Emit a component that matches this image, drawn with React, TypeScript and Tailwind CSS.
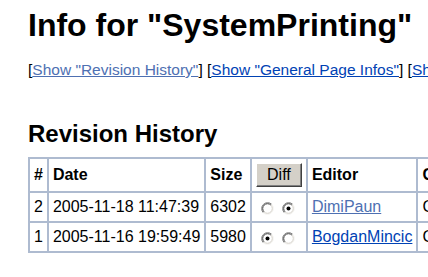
import type { ReactNode } from "react";

const ROWS = [
  { rev: "2", date: "2005-11-18 11:47:39", size: "6302", left: false, right: true, editor: "DimiPaun", visited: true, comment: "Converted" },
  { rev: "1", date: "2005-11-16 19:59:49", size: "5980", left: true, right: false, editor: "BogdanMincic", visited: false, comment: "Created" },
];

const VISITED = "text-[#4e70b2]";
const LINK = "text-[#0042b4]";

function Radio(props: { checked: boolean }) {
  return (
    <svg width="13" height="13" viewBox="0 0 13 13" className="ml-[5px] mr-[3px] mt-[3px] inline-block align-top">
      <circle cx="6.5" cy="6.5" r="6" fill="#fff" />
      {/* outer ring: dark top-left, light bottom-right */}
      <path d="M10.74 2.26 A6 6 0 0 0 2.26 10.74" fill="none" stroke="#808080" strokeWidth="1" />
      <path d="M2.26 10.74 A6 6 0 0 0 10.74 2.26" fill="none" stroke="#f4f3f0" strokeWidth="1" />
      <path d="M9.9 3.1 A4.8 4.8 0 0 0 3.1 9.9" fill="none" stroke="#404040" strokeWidth="1" />
      <path d="M3.1 9.9 A4.8 4.8 0 0 0 9.9 3.1" fill="none" stroke="#d4d0c8" strokeWidth="1" />
      {props.checked && <circle cx="6.5" cy="6.5" r="2" fill="#000" />}
    </svg>
  );
}

function Cell(props: { children?: ReactNode; head?: boolean; className?: string }) {
  const Tag = props.head ? "th" : "td";
  return (
    <Tag
      className={`border-2 border-[#aebbd0] px-1 py-1 text-left align-middle leading-[20px] ${
        props.head ? "font-bold" : "font-normal"
      } ${props.className ?? ""}`}
    >
      {props.children}
    </Tag>
  );
}

export default function App() {
  return (
    <div className="h-[277px] w-[428px] overflow-hidden whitespace-nowrap bg-white pl-[28px] font-['Liberation_Sans',Arial,sans-serif] text-black">
      <h1 className="mt-[7px] text-[32px] font-bold leading-[36px]">Info for "SystemPrinting"</h1>

      <p className="mt-[18px] text-[15.5px] leading-[18px]">
        [<a href="#" className={`${VISITED} underline`}>Show "Revision History"</a>]{" "}
        [<a href="#" className={`${LINK} underline`}>Show "General Page Infos"</a>]{" "}
        [<a href="#" className={`${LINK} underline`}>Show "Page hits and edits"</a>]
      </p>

      <h2 className="mt-[41px] text-[24px] font-bold leading-[28px]">Revision History</h2>

      <table className="mt-[9px] border-collapse text-[16px]">
        <thead>
          <tr>
            <Cell head>#</Cell>
            <Cell head>Date</Cell>
            <Cell head>Size</Cell>
            <Cell head>
              <button
                type="button"
                className="h-[24px] w-[46px] border border-t-white border-l-white border-r-[#404040] border-b-[#404040] bg-[#d4d0c8] text-[16px] font-normal leading-[20px] shadow-[inset_-1px_-1px_0_#808080]"
              >
                Diff
              </button>
            </Cell>
            <Cell head>Editor</Cell>
            <Cell head>Comment</Cell>
          </tr>
        </thead>
        <tbody>
          {ROWS.map((row) => (
            <tr key={row.rev}>
              <Cell>{row.rev}</Cell>
              <Cell>{row.date}</Cell>
              <Cell>{row.size}</Cell>
              <Cell>
                <span className="flex">
                  <Radio checked={row.left} />
                  <Radio checked={row.right} />
                </span>
              </Cell>
              <Cell>
                <a href="#" className={`${row.visited ? VISITED : LINK} underline`}>
                  {row.editor}
                </a>
              </Cell>
              <Cell>{row.comment}</Cell>
            </tr>
          ))}
        </tbody>
      </table>
    </div>
  );
}
